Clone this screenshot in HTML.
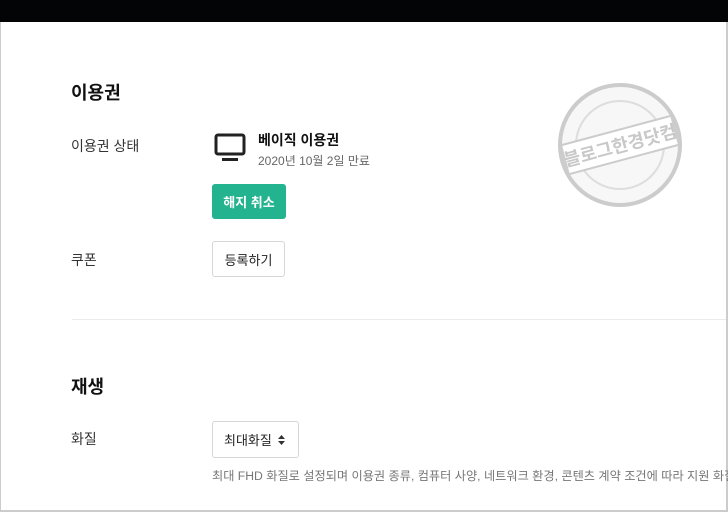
<!DOCTYPE html>
<html><head><meta charset="utf-8"><style>
*{margin:0;padding:0;box-sizing:border-box}
body{width:728px;height:512px;overflow:hidden;background:#fff;position:relative;font-family:"Liberation Sans","Noto Sans CJK KR",sans-serif;color:#222}
.a{position:absolute;white-space:nowrap}
.h{font-size:18px;font-weight:bold;color:#111}
.l{font-size:14px;color:#333}
.btn{position:absolute;border:1px solid #d6d6d6;border-radius:3px;background:#fff;font-size:13px;color:#222;display:flex;align-items:center;justify-content:center}
</style></head><body>
<div class="a" style="left:0;top:0;width:728px;height:22px;background:#020406"></div>
<div class="a" style="left:0;top:22px;width:1px;height:490px;background:#ccc"></div>
<div class="a" style="left:726px;top:22px;width:2px;height:490px;background:#ccc"></div>
<div class="a" style="left:0;top:510px;width:728px;height:2px;background:#ccc"></div>

<div class="a h" style="left:71px;top:79px">이용권</div>
<div class="a l" style="left:71px;top:136px">이용권 상태</div>
<svg class="a" style="left:214px;top:133px" width="34" height="30" viewBox="0 0 34 30"><rect x="2" y="2" width="28" height="19" rx="2" fill="none" stroke="#222" stroke-width="3"/><rect x="8" y="25" width="16" height="3" fill="#222"/></svg>
<div class="a" style="left:258px;top:130px;font-size:14px;font-weight:bold;color:#111">베이직 이용권</div>
<div class="a" style="left:258px;top:152px;font-size:12px;color:#666">2020년 10월 2일 만료</div>
<div class="btn" style="left:212px;top:184px;width:74px;height:35px;background:#23b38f;border-color:#23b38f;color:#fff;font-weight:bold">해지 취소</div>
<div class="a l" style="left:71px;top:250px">쿠폰</div>
<div class="btn" style="left:212px;top:241px;width:73px;height:36px">등록하기</div>

<div class="a" style="left:72px;top:319px;width:654px;height:1px;background:#eaeaea"></div>

<div class="a h" style="left:71px;top:373px">재생</div>
<div class="a l" style="left:71px;top:429px">화질</div>
<div class="btn" style="left:212px;top:421px;width:87px;height:37px;justify-content:flex-start;padding-left:11px">최대화질 <svg style="margin-left:6px" width="7" height="10" viewBox="0 0 7 10"><path d="M3.5 0L7 4H0Z M3.5 10L7 6H0Z" fill="#333"/></svg></div>
<div class="a" style="left:212px;top:466px;font-size:12.2px;color:#777">최대 FHD 화질로 설정되며 이용권 종류, 컴퓨터 사양, 네트워크 환경, 콘텐츠 계약 조건에 따라 지원 화질이</div>

<svg class="a" style="left:555px;top:75px" width="130" height="140" viewBox="0 0 130 140"><circle cx="65" cy="70" r="60" fill="#f7f7f7" stroke="#ccc" stroke-width="4"/><circle cx="65" cy="70" r="44" fill="none" stroke="#ddd" stroke-width="2"/><g transform="rotate(-15 65 70)"><rect x="8" y="55" width="114" height="30" fill="#fff" stroke="#ccc" stroke-width="2"/><text x="65" y="77" font-size="18" font-weight="bold" text-anchor="middle" fill="#c8c8c8" font-family="Noto Sans CJK KR,sans-serif">블로그한경닷컴</text></g></svg>
</body></html>
